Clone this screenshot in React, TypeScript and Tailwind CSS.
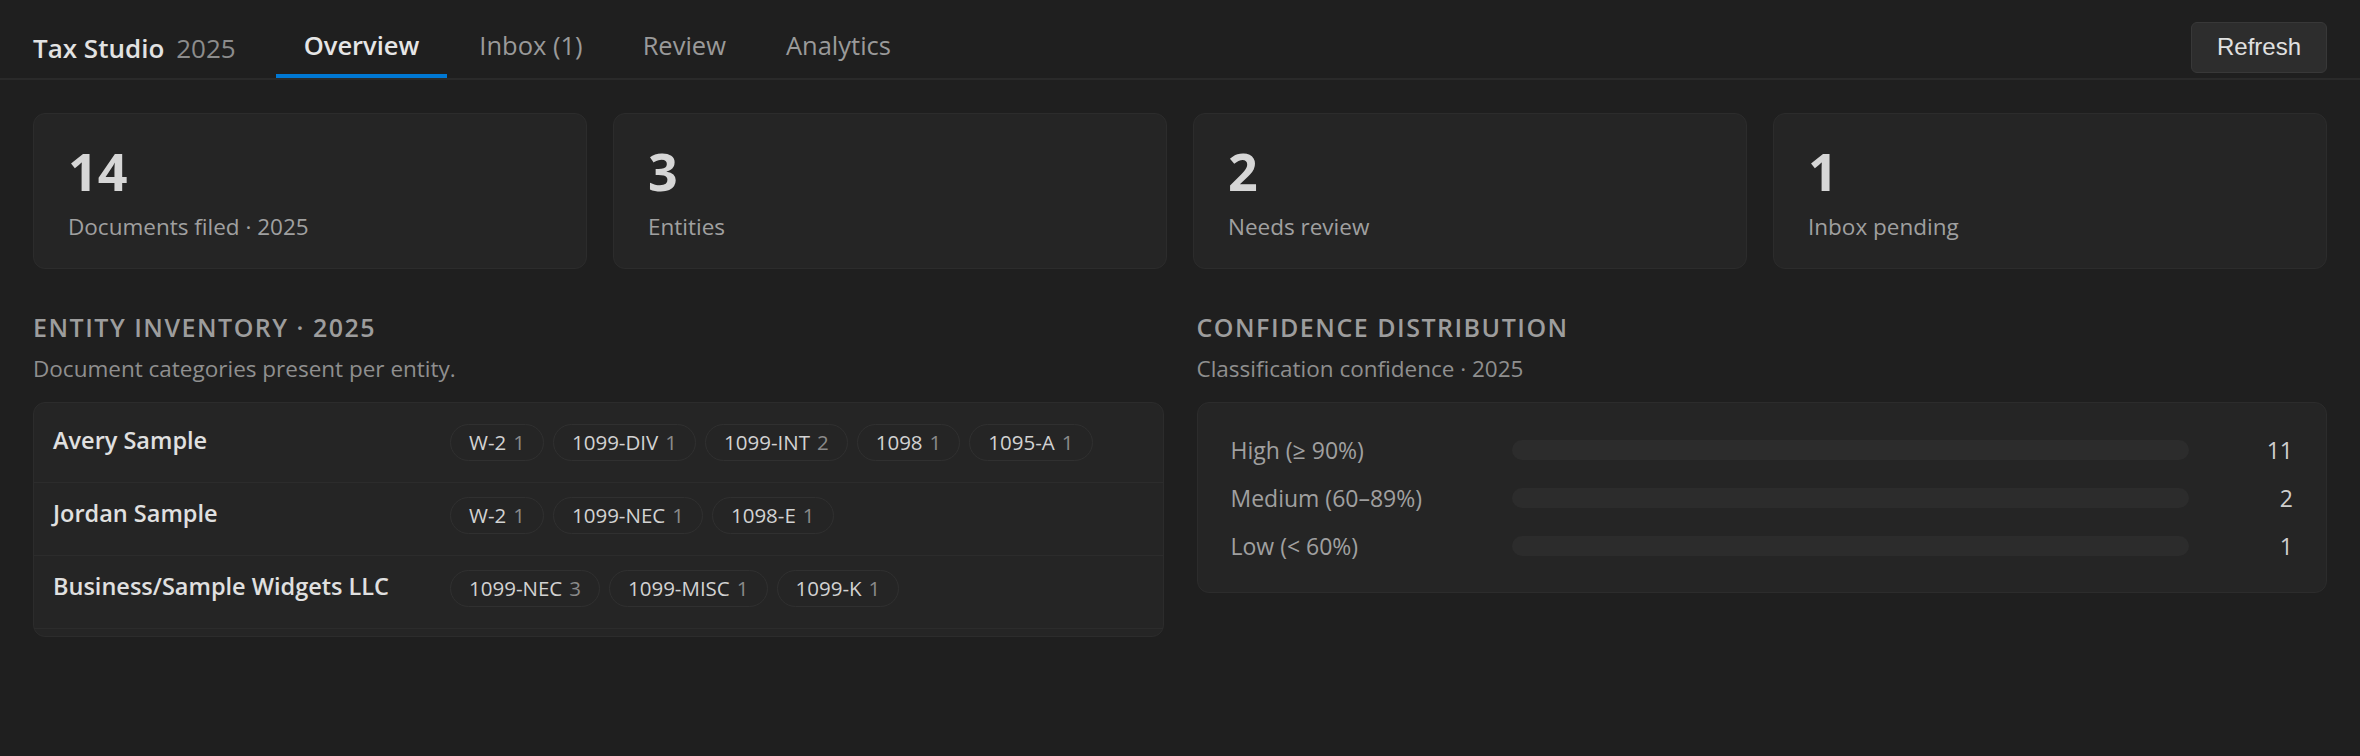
import React from 'react';

type Chip = { label: string; count: number };

const stats = [
  { value: '14', label: 'Documents filed · 2025' },
  { value: '3', label: 'Entities' },
  { value: '2', label: 'Needs review' },
  { value: '1', label: 'Inbox pending' },
];

const entities: { name: string; chips: Chip[] }[] = [
  {
    name: 'Avery Sample',
    chips: [
      { label: 'W-2', count: 1 },
      { label: '1099-DIV', count: 1 },
      { label: '1099-INT', count: 2 },
      { label: '1098', count: 1 },
      { label: '1095-A', count: 1 },
    ],
  },
  {
    name: 'Jordan Sample',
    chips: [
      { label: 'W-2', count: 1 },
      { label: '1099-NEC', count: 1 },
      { label: '1098-E', count: 1 },
    ],
  },
  {
    name: 'Business/Sample Widgets LLC',
    chips: [
      { label: '1099-NEC', count: 3 },
      { label: '1099-MISC', count: 1 },
      { label: '1099-K', count: 1 },
    ],
  },
];

const confidence = [
  { label: 'High (≥ 90%)', value: 11 },
  { label: 'Medium (60–89%)', value: 2 },
  { label: 'Low (< 60%)', value: 1 },
];

const tabs = ['Overview', 'Inbox (1)', 'Review', 'Analytics'];

export default function App() {
  return (
    <div className="min-h-screen bg-[#1f1f1f] font-['Open_Sans',sans-serif] text-[#d4d4d4]">
      {/* Top bar */}
      <header className="flex h-[80px] border-b-2 border-[#2a2a2a] px-[33px]">
        <div className="flex items-center pt-[18px]">
          <span className="text-[26px] font-semibold text-[#e2e2e2]">Tax Studio</span>
          <span className="ml-[12px] text-[26px] text-[#8c8c8c]">2025</span>
        </div>
        <nav className="ml-[40px] flex gap-[4px]">
          {tabs.map((t, i) => (
            <button
              key={t}
              className={
                i === 0
                  ? 'flex items-center border-b-[4px] border-[#0078d4] px-[28px] pt-[16px] text-[25.5px] font-semibold text-[#e6e6e6]'
                  : 'flex items-center border-b-[4px] border-transparent px-[28px] pt-[16px] text-[25.5px] text-[#9a9a9a]'
              }
            >
              {t}
            </button>
          ))}
        </nav>
        <div className="ml-auto flex items-center pt-[16px]">
          <button className="h-[51px] rounded-[6px] border border-[#383838] bg-[#2d2d2d] px-[25px] font-['Liberation_Sans',Arial,sans-serif] text-[24px] text-[#e0e0e0]">
            Refresh
          </button>
        </div>
      </header>

      <main className="px-[33px] pt-[33px]">
        {/* Stat cards */}
        <div className="grid grid-cols-4 gap-[26px]">
          {stats.map((s) => (
            <div
              key={s.label}
              className="h-[156px] rounded-[12px] border border-[#2c2c2c] bg-[#252525] px-[34px] pt-[27px]"
            >
              <div className="text-[52px] font-bold leading-[60px] text-[#d6d6d6]">{s.value}</div>
              <div className="mt-[11px] text-[22.5px] leading-[30px] text-[#a0a0a0]">{s.label}</div>
            </div>
          ))}
        </div>

        <div className="mt-[41px] grid grid-cols-2 gap-[33px]">
          {/* Entity inventory */}
          <section>
            <h2 className="text-[25px] font-semibold uppercase leading-[34px] tracking-[0.06em] text-[#9d9d9d]">
              Entity inventory · 2025
            </h2>
            <p className="mt-[9px] text-[22.5px] leading-[31px] text-[#8f8f8f]">
              Document categories present per entity.
            </p>
            <div className="mt-[18px] rounded-[12px] border border-[#2c2c2c] bg-[#252525] py-[7px]">
              {entities.map((e) => (
                <div key={e.name} className="flex items-start border-b border-[#2c2c2c] pb-[21px] pl-[19px] pt-[14px]">
                  <div className="w-[397px] shrink-0 text-[23.5px] font-semibold leading-[32px] text-[#e0e0e0]">
                    {e.name}
                  </div>
                  <div className="flex flex-wrap gap-[9px]">
                    {e.chips.map((c) => (
                      <span
                        key={c.label}
                        className="flex h-[37px] items-center rounded-full border border-[#303030] px-[18px] text-[20.5px] text-[#d2d2d2]"
                      >
                        {c.label}
                        <span className="ml-[7px] text-[#8a8a8a]">{c.count}</span>
                      </span>
                    ))}
                  </div>
                </div>
              ))}
            </div>
          </section>

          {/* Confidence distribution */}
          <section>
            <h2 className="text-[25px] font-semibold uppercase leading-[34px] tracking-[0.06em] text-[#9d9d9d]">
              Confidence distribution
            </h2>
            <p className="mt-[9px] text-[22.5px] leading-[31px] text-[#8f8f8f]">Classification confidence · 2025</p>
            <div className="mt-[18px] flex flex-col gap-[20px] rounded-[12px] border border-[#2c2c2c] bg-[#252525] px-[33px] pb-[32px] pt-[33px]">
              {confidence.map((r) => (
                <div key={r.label} className="flex h-[28px] items-center">
                  <div className="w-[281px] shrink-0 text-[23px] text-[#a0a0a0]">{r.label}</div>
                  <div className="h-[20px] flex-1 rounded-full bg-[#2c2c2c]" />
                  <div className="w-[104px] shrink-0 text-right text-[23px] text-[#cfcfcf]">{r.value}</div>
                </div>
              ))}
            </div>
          </section>
        </div>
      </main>
    </div>
  );
}
